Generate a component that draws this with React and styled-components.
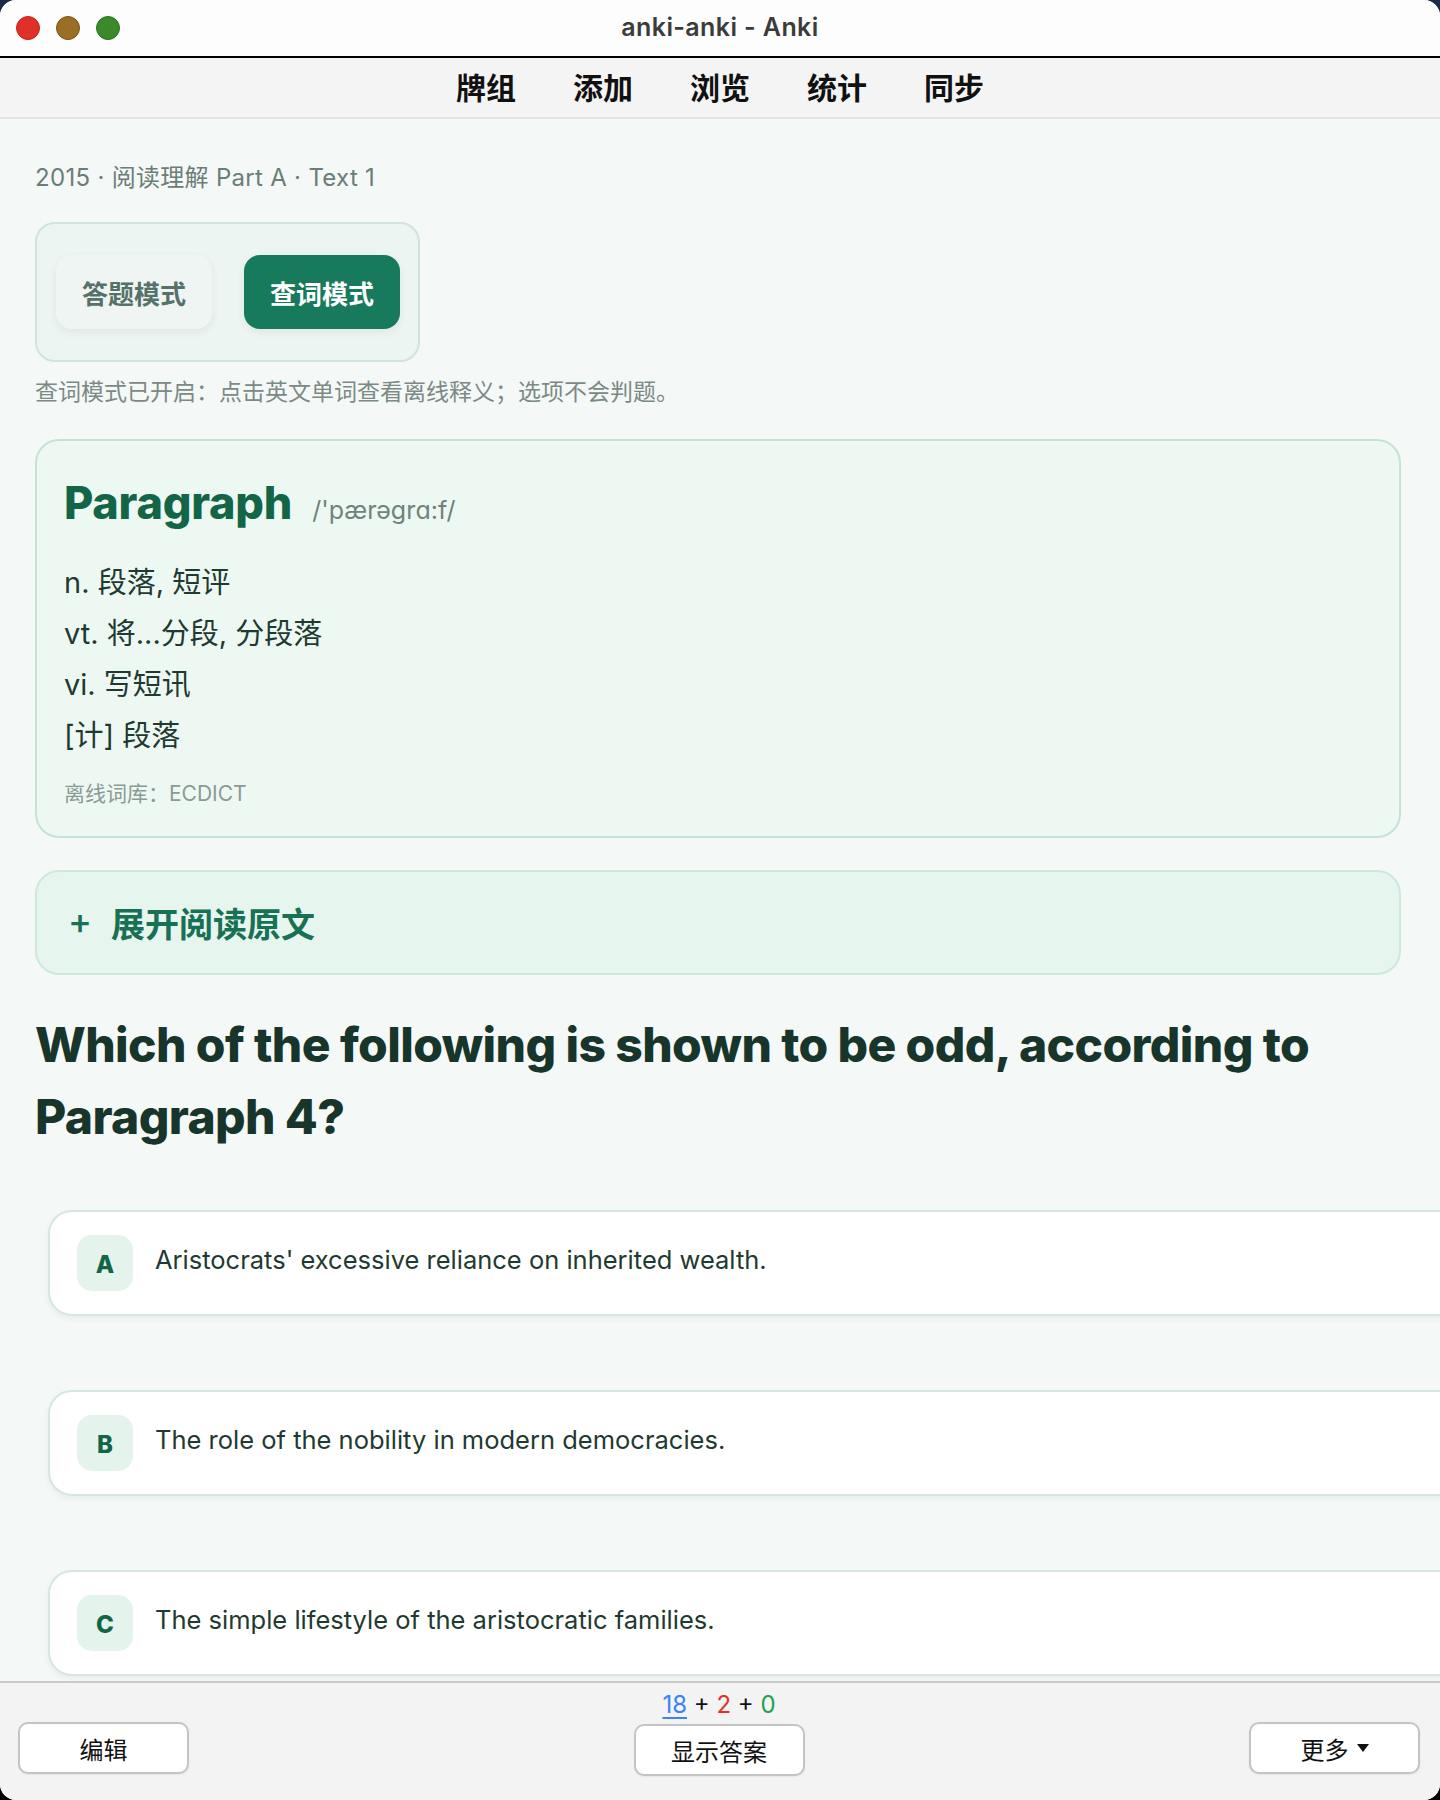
import React from "react";
import styled, { createGlobalStyle } from "styled-components";

const Global = createGlobalStyle`
  html, body { margin: 0; padding: 0; }
  body {
    background: linear-gradient(180deg, #1b2b47 0%, #000 100%);
    font-family: Inter, "Noto Sans CJK SC", sans-serif;
    overflow: hidden;
  }
  * { box-sizing: border-box; }
`;

const Window = styled.div`
  width: 1440px;
  height: 1800px;
  border-radius: 16px;
  overflow: hidden;
  display: flex;
  flex-direction: column;
  background: #f4f8f7;
`;

const TitleBar = styled.div`
  height: 58px;
  flex: none;
  background: #fdfdfd;
  border-bottom: 2px solid #000;
  display: flex;
  align-items: center;
  justify-content: center;
  position: relative;
`;

const Lights = styled.div`
  position: absolute;
  left: 16px;
  top: 16px;
  display: flex;
  gap: 16px;
`;

const Light = styled.span`
  width: 24px;
  height: 24px;
  border-radius: 50%;
  background: ${(p) => p.$c};
  border: 1px solid ${(p) => p.$b};
`;

const Title = styled.div`
  font-family: Inter, sans-serif;
  font-weight: 600;
  font-size: 25px;
  letter-spacing: 0.4px;
  color: #3b3b3b;
  margin-top: -2px;
`;

const Nav = styled.nav`
  height: 61px;
  flex: none;
  background: #f4f4f4;
  border-bottom: 2px solid #e3e3e3;
  display: flex;
  justify-content: center;
  align-items: center;
  gap: 57px;
  padding-bottom: 4px;
`;

const NavItem = styled.span`
  font-family: "Noto Sans CJK SC", sans-serif;
  font-weight: 700;
  font-size: 30px;
  color: #111;
  line-height: 1;
`;

const Content = styled.main`
  flex: 1;
  overflow: hidden;
  padding: 44px 39px 0 35px;
  display: flex;
  flex-direction: column;
`;

const Crumb = styled.div`
  font-size: 24px;
  line-height: 30px;
  letter-spacing: 0.3px;
  color: #6b7d77;
`;

const ToggleBox = styled.div`
  margin-top: 29px;
  align-self: flex-start;
  display: flex;
  gap: 32px;
  padding: 31px 18px 31px 19px;
  background: #edf5f2;
  border: 2px solid #cfe4dc;
  border-radius: 20px;
`;

const ModeButton = styled.button`
  width: 156px;
  height: 74px;
  border: none;
  border-radius: 16px;
  font-family: "Noto Sans CJK SC", sans-serif;
  font-weight: 700;
  font-size: 26px;
  background: ${(p) => (p.$active ? "#187a5c" : "#eff5f3")};
  color: ${(p) => (p.$active ? "#fff" : "#56716a")};
  box-shadow: 0 3px 8px rgba(20, 60, 45, 0.08);
`;

const Hint = styled.div`
  margin-top: 15px;
  font-size: 23px;
  line-height: 30px;
  color: #7b8a85;
`;

const DefCard = styled.section`
  margin-top: 32px;
  background: #eef8f3;
  border: 2px solid #c3e4d5;
  border-radius: 24px;
  padding: 34px 28px 28px 27px;
`;

const WordRow = styled.div`
  display: flex;
  align-items: baseline;
  gap: 20px;
  line-height: 56px;
`;

const Word = styled.h2`
  margin: 0;
  font-size: 45px;
  font-weight: 800;
  color: #136548;
  letter-spacing: -0.2px;
`;

const Ipa = styled.span`
  font-size: 25px;
  color: #6f837c;
`;

const Defs = styled.div`
  margin-top: 19px;
`;

const DefLine = styled.div`
  font-size: 29px;
  line-height: 51px;
  color: #1e3a31;
`;

const Source = styled.div`
  margin-top: 19px;
  font-size: 21px;
  line-height: 28px;
  color: #8a9a94;
`;

const Expand = styled.div`
  margin-top: 32px;
  height: 105px;
  background: #e6f5ee;
  border: 2px solid #cde8dc;
  border-radius: 24px;
  display: flex;
  align-items: center;
  padding-left: 31px;
  gap: 19px;
  font-family: "Noto Sans CJK SC", sans-serif;
  font-weight: 700;
  font-size: 34px;
  color: #187055;
`;

const Plus = styled.span`
  font-family: Inter, sans-serif;
  font-weight: 500;
  font-size: 36px;
  margin-top: -4px;
`;

const Question = styled.h1`
  margin: 34px 0 0;
  font-size: 48px;
  line-height: 72px;
  font-weight: 800;
  color: #17352b;
  letter-spacing: -0.6px;
`;

const Options = styled.div`
  margin-top: 57px;
  margin-left: 13px;
  width: calc(100% + 80px);
  display: flex;
  flex-direction: column;
  gap: 74px;
`;

const OptionCard = styled.div`
  height: 106px;
  background: #fff;
  border: 2px solid #d6e6e0;
  border-radius: 24px;
  box-shadow: 0 3px 6px rgba(20, 60, 45, 0.05);
  display: flex;
  align-items: flex-start;
  padding: 23px 27px;
  gap: 22px;
`;

const Badge = styled.span`
  flex: none;
  width: 56px;
  height: 56px;
  border-radius: 15px;
  background: #e4f3ec;
  color: #136548;
  font-weight: 800;
  font-size: 24px;
  display: flex;
  align-items: center;
  justify-content: center;
  padding-top: 2px;
`;

const OptionText = styled.span`
  font-size: 25.5px;
  line-height: 34px;
  padding-top: 8px;
  color: #1f3a31;
`;

const Footer = styled.footer`
  flex: none;
  height: 119px;
  background: #f3f3f3;
  border-top: 2px solid #c9c9c9;
  display: grid;
  grid-template-columns: 1fr auto 1fr;
  padding: 0 20px 0 18px;
`;

const Center = styled.div`
  display: flex;
  flex-direction: column;
  align-items: center;
  padding-top: 8px;
  gap: 6px;
`;

const Counts = styled.div`
  font-family: Inter, sans-serif;
  font-size: 24px;
  line-height: 27px;
  color: #111;
`;

const Count = styled.span`
  color: ${(p) => p.$c};
  text-decoration: ${(p) => (p.$u ? "underline" : "none")};
  text-underline-offset: 4px;
  text-decoration-thickness: 2px;
`;

const FootButton = styled.button`
  width: 171px;
  height: 52px;
  background: #fff;
  border: 2px solid #c4c4c4;
  border-radius: 10px;
  font-family: "Noto Sans CJK SC", sans-serif;
  font-size: 24px;
  color: #111;
  display: flex;
  align-items: center;
  justify-content: center;
  gap: 8px;
  box-shadow: 0 1px 2px rgba(0, 0, 0, 0.06);
  align-self: ${(p) => p.$self || "auto"};
  justify-self: ${(p) => p.$justify || "auto"};
  margin-bottom: ${(p) => p.$mb || 0}px;
`;

const options = [
  ["A", "Aristocrats' excessive reliance on inherited wealth."],
  ["B", "The role of the nobility in modern democracies."],
  ["C", "The simple lifestyle of the aristocratic families."],
];

export default function App() {
  return (
    <>
      <Global />
      <Window>
        <TitleBar>
          <Lights>
            <Light $c="#e0302a" $b="#c0241f" />
            <Light $c="#9a6e24" $b="#7a5418" />
            <Light $c="#3a8a2a" $b="#2d6f20" />
          </Lights>
          <Title>anki-anki - Anki</Title>
        </TitleBar>
        <Nav>
          {["牌组", "添加", "浏览", "统计", "同步"].map((t) => (
            <NavItem key={t}>{t}</NavItem>
          ))}
        </Nav>
        <Content>
          <Crumb>2015 · 阅读理解 Part A · Text 1</Crumb>
          <ToggleBox>
            <ModeButton>答题模式</ModeButton>
            <ModeButton $active>查词模式</ModeButton>
          </ToggleBox>
          <Hint>查词模式已开启：点击英文单词查看离线释义；选项不会判题。</Hint>
          <DefCard>
            <WordRow>
              <Word>Paragraph</Word>
              <Ipa>/'pærəgrɑ:f/</Ipa>
            </WordRow>
            <Defs>
              <DefLine>n. 段落, 短评</DefLine>
              <DefLine>vt. 将...分段, 分段落</DefLine>
              <DefLine>vi. 写短讯</DefLine>
              <DefLine>[计] 段落</DefLine>
            </Defs>
            <Source>离线词库：ECDICT</Source>
          </DefCard>
          <Expand>
            <Plus>+</Plus>
            <span>展开阅读原文</span>
          </Expand>
          <Question>
            Which of the following is shown to be odd, according to Paragraph 4?
          </Question>
          <Options>
            {options.map(([k, t]) => (
              <OptionCard key={k}>
                <Badge>{k}</Badge>
                <OptionText>{t}</OptionText>
              </OptionCard>
            ))}
          </Options>
        </Content>
        <Footer>
          <FootButton $self="end" $justify="start" $mb={26}>
            编辑
          </FootButton>
          <Center>
            <Counts>
              <Count $c="#3b82f6" $u>
                18
              </Count>{" "}
              + <Count $c="#e0302a">2</Count> + <Count $c="#22a04b">0</Count>
            </Counts>
            <FootButton>显示答案</FootButton>
          </Center>
          <FootButton $self="end" $justify="end" $mb={26}>
            更多
            <svg width="12" height="8" viewBox="0 0 12 8">
              <path d="M0 0h12L6 8z" fill="#111" />
            </svg>
          </FootButton>
        </Footer>
      </Window>
    </>
  );
}
